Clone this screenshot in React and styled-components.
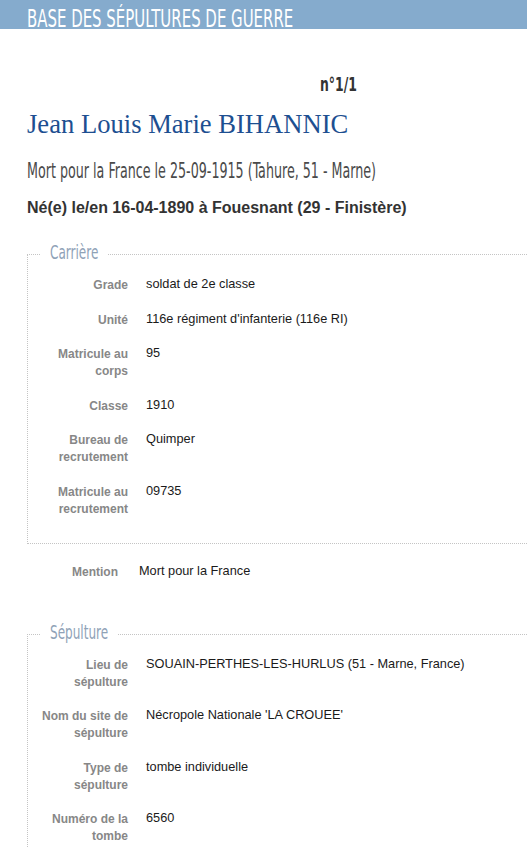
import styled, { createGlobalStyle } from 'styled-components';

const GlobalStyle = createGlobalStyle`
	body {
		margin: 0;
		background: #fff;
		font-family: "Liberation Sans", Arial, sans-serif;
		overflow-x: hidden;
	}
`;

// police étroite pour imiter Oswald
const Narrow = styled.span`
	display: inline-block;
	font-family: "DejaVu Sans", sans-serif;
	font-stretch: condensed;
	white-space: nowrap;
	transform-origin: left center;
	transform: scaleX(${({ $sx }) => $sx});
	${({ $w }) => ($w ? `width: ${$w}px;` : '')}
`;

const TopBar = styled.header`
	height: 29px;
	background: #85abcd;
	padding: 9px 0 0 27px;
	box-sizing: border-box;
	color: #fff;
	font-size: 24.5px;
	line-height: 20px;
`;

const Page = styled.main`
	width: 600px;
	padding-left: 27px;
`;

const Counter = styled.div`
	margin-top: 43px;
	padding-left: 293px;
	font-size: 20px;
	line-height: 24px;
	font-weight: bold;
	color: #333;
`;

const Name = styled.h1`
	margin: 12px 0 0;
	font-family: "Liberation Serif", "Times New Roman", serif;
	font-weight: normal;
	font-size: 26.6px;
	line-height: 32px;
	color: #1d4f91;
`;

const Death = styled.div`
	margin-top: 18px;
	font-size: 21px;
	line-height: 26px;
	color: #4a4a4a;
`;

const Birth = styled.div`
	margin-top: 14px;
	font-size: 16px;
	line-height: 20px;
	font-weight: bold;
	color: #333;
`;

// en-tête de bloc : pointillés + titre
const SectionHead = styled.div`
	display: flex;
	align-items: flex-start;
	height: 24px;
	margin: ${({ $top }) => $top}px 0 -12px;
	width: 600px;
`;

const Dots = styled.div`
	flex: ${({ $grow }) => ($grow ? '1 1 auto' : '0 0 13px')};
	margin-top: 12px;
	border-top: 1px dotted #c4c4c4;
`;

const Legend = styled.div`
	padding: 0 10px;
	font-size: 20px;
	line-height: 20px;
	color: #8fa2b7;
`;

const Section = styled.section`
	width: 600px;
	box-sizing: border-box;
	border: 1px dotted #c4c4c4;
	border-top: none;
	padding: 21px 0 25px 12px;
	display: flex;
	flex-direction: column;
	gap: 15.5px;
`;

const Row = styled.div`
	display: flex;
	gap: ${({ $gap }) => $gap || 18}px;
	margin: ${({ $top }) => $top || 0}px 0 0 ${({ $indent }) => $indent || 0}px;
`;

const Label = styled.div`
	flex: 0 0 88px;
	padding-top: 2px;
	text-align: right;
	font-size: 12px;
	line-height: 17px;
	font-weight: bold;
	color: #878787;
`;

const Value = styled.div`
	font-size: 12.75px;
	line-height: 17px;
	color: #1a1a1a;
`;

const carriere = [
	['Grade', 'soldat de 2e classe'],
	['Unité', "116e régiment d'infanterie (116e RI)"],
	['Matricule au corps', '95'],
	['Classe', '1910'],
	['Bureau de recrutement', 'Quimper'],
	['Matricule au recrutement', '09735'],
];

const sepulture = [
	['Lieu de sépulture', 'SOUAIN-PERTHES-LES-HURLUS (51 - Marne, France)'],
	['Nom du site de sépulture', "Nécropole Nationale 'LA CROUEE'"],
	['Type de sépulture', 'tombe individuelle'],
	['Numéro de la tombe', '6560'],
];

const Block = ({ title, width, top, rows }) => (
	<>
		<SectionHead $top={top}>
			<Dots />
			<Legend>
				<Narrow $sx={0.67} $w={width}>
					{title}
				</Narrow>
			</Legend>
			<Dots $grow />
		</SectionHead>
		<Section>
			{rows.map(([label, value]) => (
				<Row key={label}>
					<Label>{label}</Label>
					<Value>{value}</Value>
				</Row>
			))}
		</Section>
	</>
);

export default function App() {
	return (
		<>
			<GlobalStyle />
			<TopBar>
				<Narrow $sx={0.678}>BASE DES SÉPULTURES DE GUERRE</Narrow>
			</TopBar>
			<Page>
				<Counter>
					<Narrow $sx={0.69}>n°1/1</Narrow>
				</Counter>
				<Name>Jean Louis Marie BIHANNIC</Name>
				<Death>
					<Narrow $sx={0.672}>Mort pour la France le 25-09-1915 (Tahure, 51 - Marne)</Narrow>
				</Death>
				<Birth>Né(e) le/en 16-04-1890 à Fouesnant (29 - Finistère)</Birth>

				<Block title="Carrière" width={48} top={24} rows={carriere} />

				<Row $indent={3} $gap={21} $top={18}>
					<Label>Mention</Label>
					<Value>Mort pour la France</Value>
				</Row>

				<Block title="Sépulture" width={58} top={41} rows={sepulture} />
			</Page>
		</>
	);
}
